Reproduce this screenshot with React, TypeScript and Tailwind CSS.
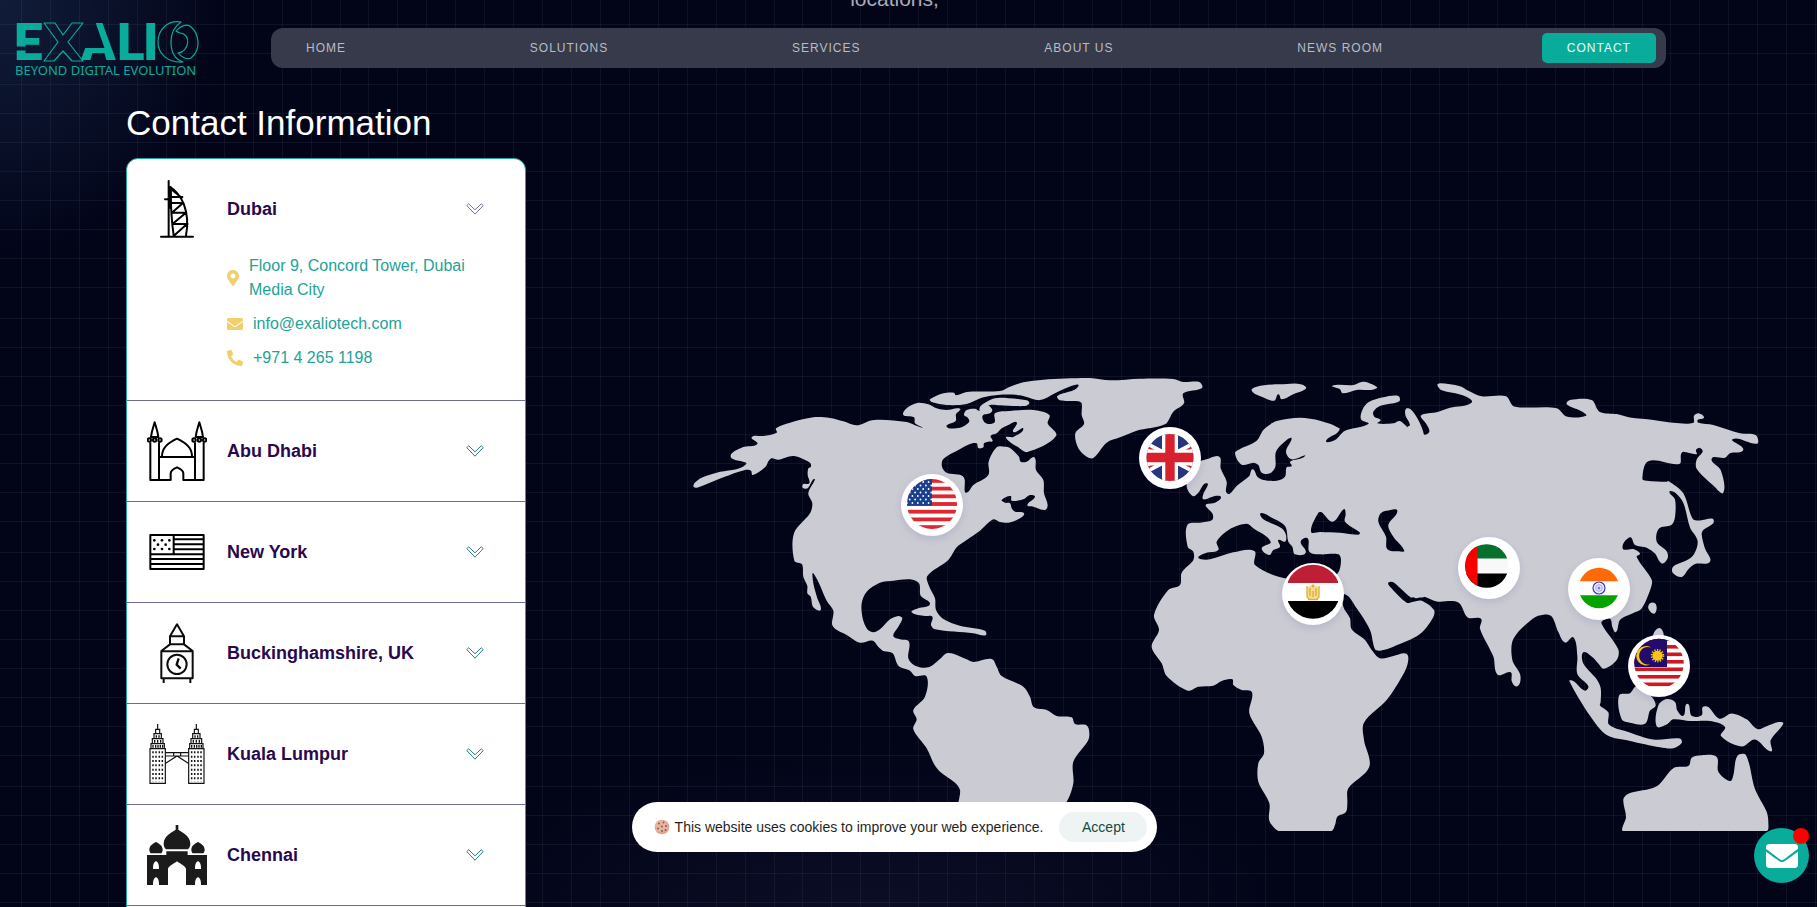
import { useState, type ReactNode } from "react";
import { FaEnvelope, FaMapMarkerAlt, FaPhoneAlt } from "react-icons/fa";

type Point = [number, number];

/** Turns "x,y x,y ..." into a closed curve that passes through every point. */
function coast(list: string): string {
  const p = list
    .trim()
    .split(/\s+/)
    .map((pair) => pair.split(",").map(Number) as Point);
  const n = p.length;
  let d = `M${p[0][0]} ${p[0][1]}`;
  for (let i = 0; i < n; i++) {
    const a = p[(i + n - 1) % n];
    const b = p[i];
    const c = p[(i + 1) % n];
    const e = p[(i + 2) % n];
    const len = Math.hypot(c[0] - b[0], c[1] - b[1]);
    const k1 = (0.3 * len) / (Math.hypot(c[0] - a[0], c[1] - a[1]) || 1);
    const k2 = (0.3 * len) / (Math.hypot(e[0] - b[0], e[1] - b[1]) || 1);
    const f = (v: number) => v.toFixed(1);
    d += `C${f(b[0] + (c[0] - a[0]) * k1)} ${f(b[1] + (c[1] - a[1]) * k1)} ${f(c[0] - (e[0] - b[0]) * k2)} ${f(c[1] - (e[1] - b[1]) * k2)} ${c[0]} ${c[1]}`;
  }
  return d + "Z";
}

const AMERICAS = [
  "42,382 43,370 65,353 110,338 198,313 152,290 188,262 232,252 215,232 250,228 290,218 288,205 330,188 400,172 450,174 490,184 530,196 570,182 600,179 680,186 727,203 705,190 702,172 670,165 680,145 712,129 745,133 770,145 800,150 840,146 828,163 827,183 800,200 840,203 858,194 868,184 862,172 852,165 860,150 885,146 898,152 905,143 925,137 937,150 930,160 908,167 912,185 925,192 944,187 945,160 990,153 1060,150 1108,165 1103,190 1128,228 1042,276 1015,262 978,233 1000,231 1030,206 1000,216 1010,187 985,195 965,205 950,220 932,228 938,243 925,245 912,250 910,262 895,264 890,250 870,252 835,270 790,297 786,320 800,338 850,350 855,397 865,395 880,375 925,345 926,305 950,262 975,260 990,264 1017,290 1022,305 1040,305 1063,292 1068,330 1090,360 1092,400 1103,435 1095,450 1060,440 1042,435 1065,410 1050,405 1030,418 995,422 992,408 965,420 975,428 990,430 995,445 1005,455 1032,460 1020,475 985,488 960,486 940,478 900,512 860,540 830,562 805,600 742,648 748,680 765,715 768,750 790,777 840,797 915,812 917,826 880,820 765,808 753,795 757,770 735,768 695,757 715,745 750,732 722,707 717,670 690,658 640,662 600,668 560,695 545,730 548,775 562,808 580,817 600,808 630,778 655,768 667,775 655,800 640,828 660,838 687,845 685,895 705,917 745,922 780,897 800,880 820,881 860,898 880,906 935,897 950,920 965,948 1030,980 1050,1010 1062,1042 1100,1050 1130,1068 1175,1072 1185,1092 1218,1095 1227,1110 1225,1140 1180,1205 1180,1270 1160,1325 1130,1345 842,1345 840,1290 825,1268 780,1235 762,1212 740,1165 700,1108 710,1078 700,1050 735,1010 740,950 705,948 690,932 655,917 638,880 610,873 595,860 578,842 540,848 500,825 458,798 460,752 440,722 400,640 400,670 412,715 422,750 400,742 392,710 382,700 382,678 370,650 366,613 343,602 342,520 390,460 397,430 385,400 405,358 398,360 383,385 368,383 370,372 388,370 383,345 385,325 393,320 390,308 340,288 295,299 272,296 255,322 218,345 213,332 195,330 130,352 60,380",
  "750,118 790,100 822,98 828,106 860,96 960,93 990,80 1030,67 1090,59 1230,54 1290,61 1380,56 1480,57 1510,66 1558,66 1566,84 1510,100 1512,130 1480,155 1455,193 1370,212 1320,232 1280,248 1240,294 1220,290 1195,265 1186,220 1212,192 1205,165 1205,130 1195,124 1140,121 1132,108 1195,79 1140,92 1090,118 1070,120 1020,106 960,104 905,113 860,132 800,135 755,126",
  "898,148 930,120 960,113 1040,121 1048,130 1035,138 960,136 930,135",
];

const EUROPE_AFRICA = [
  "442,495 480,488 516,480 518,462 497,438 500,432 525,428 543,412 525,408 490,418 490,402 504,372 492,372 475,398 458,408 440,375 470,310 500,298 538,290 542,325 560,365 558,395 568,402 590,378 628,348 638,328 652,350 670,360 710,362 735,350 740,322 755,318 750,305 795,288 755,298 738,275 755,235 740,240 708,275 706,320 690,340 665,338 655,315 640,308 605,314 585,280 600,267 650,242 672,208 710,183 780,173 840,182 898,205 892,218 858,243 885,240 915,212 985,192 963,178 967,150 985,127 1030,112 1075,108 1078,124 1020,138 1000,155 1003,170 1022,180 1012,190 1060,190 1080,183 1108,200 1096,165 1098,146 1112,148 1135,180 1152,225 1155,300 1155,700 1150,712 1125,710 1112,712 1060,667 1045,668 1048,678 1100,728 1120,725 1145,722 1182,750 1178,775 1140,822 1060,860 1020,872 1005,868 990,810 950,745 912,702 910,740 930,775 935,808 975,840 995,870 1020,895 1060,888 1100,882 1102,915 1080,960 1040,1020 972,1088 972,1140 988,1220 925,1285 922,1330 918,1356 892,1370 886,1392 875,1413 845,1413 745,1413 715,1413 688,1382 688,1330 655,1265 655,1210 672,1180 665,1130 628,1060 636,997 605,990 580,975 577,958 545,963 520,977 475,980 443,992 380,948 365,910 335,860 357,810 342,765 385,690 420,675 425,638 460,600 460,575 443,560",
  "475,590 500,578 535,570 530,545 570,507 620,491 640,505 692,545 665,565 688,585 700,570 720,560 715,540 735,545 738,525 725,505 670,478 662,460 690,470 735,498 745,545 757,560 765,583 797,578 782,545 803,535 808,575 840,583 895,583 903,600 893,640 850,660 735,655 645,615 643,573 580,577 510,598 480,597",
  "813,515 835,458 845,457 878,485 912,447 917,462 915,485 960,518 955,524 900,518 840,516",
  "1015,485 1022,460 1040,452 1072,452 1045,495 1060,530 1093,572 1075,574 1042,568 1038,530",
  "635,92 650,80 720,73 797,80 755,105 725,118 715,103 703,122 665,110",
  "877,77 940,75 965,66 985,68 1010,85 950,90 908,100 900,88",
];

const ASIA_OCEANIA = [
  "22,195 55,190 72,214 88,205 78,182 62,162 72,155 110,150 150,137 215,122 190,102 125,87 112,72 120,67 180,75 205,88 245,104 318,104 342,133 470,138 500,162 558,160 540,145 500,127 510,115 575,115 598,148 650,155 690,165 760,172 820,180 880,180 882,160 897,153 912,165 893,172 895,180 940,186 1020,210 1068,216 1071,240 998,227 1030,257 990,267 975,280 935,283 962,315 970,380 940,360 890,312 890,285 908,262 900,252 888,258 890,270 850,263 843,270 838,298 745,290 727,340 740,346 800,349 805,347 850,382 878,455 900,460 938,455 940,468 910,487 905,500 915,540 930,578 885,585 865,600 845,622 818,610 820,592 875,565 893,520 870,480 850,410 825,380 808,378 825,400 825,450 815,472 777,483 770,520 800,548 803,568 785,583 765,555 740,538 705,530 690,508 668,540 700,542 720,555 710,565 755,630 752,655 725,712 700,725 660,745 648,780 637,765 630,742 605,750 610,765 655,830 650,860 612,885 595,870 575,850 550,838 550,870 590,915 602,940 602,980 600,990 625,1010 627,1045 680,1065 760,1088 840,1085 845,1098 820,1113 780,1110 690,1092 620,1075 570,1020 508,920 520,920 555,948 565,935 532,900 532,850 520,795 495,810 475,780 455,735 430,730 400,740 340,800 337,860 360,900 360,925 348,936 335,920 332,895 293,902 280,850 240,770 243,742 203,738 175,695 110,692 70,678 45,682 22,655",
  "745,712 750,697 765,697 770,712 762,727",
  "760,795 778,768 790,795",
  "657,962 690,955 710,935 755,965 767,990 750,1005 735,1043 690,1040 665,1030",
  "770,1050 775,990 800,972 825,980 832,1005 850,1020 862,985 875,1020 905,1018 908,995 925,995 958,1028 995,1013 1040,1030 1072,1058 1100,1050 1135,1038 1150,1042 1112,1090 1113,1122 1065,1088 1025,1108 963,1078 975,1052 930,1035 870,1035 820,1030 800,1045",
  "670,1350 678,1310 670,1260 685,1243 770,1222 820,1170 866,1163 875,1140 905,1133 950,1138 955,1180 990,1207 1000,1190 1012,1135 1038,1133 1065,1230 1100,1295 1105,1325 1100,1350",
];

function WorldMap() {
  return (
    <svg viewBox="0 0 3321 1413" className="block w-full fill-[#cacbd3]" role="img" aria-label="World map">
      <path d={AMERICAS.map(coast).join("")} />
      <path transform="translate(1080 0)" fillRule="evenodd" d={EUROPE_AFRICA.map(coast).join("")} />
      <path transform="translate(2160 0) scale(1 1.0466)" d={ASIA_OCEANIA.map(coast).join("")} />
    </svg>
  );
}

function UsFlag() {
  return (
    <g clipPath="url(#us)">
      <clipPath id="us"><circle cx="31" cy="30" r="25" /></clipPath>
      <path fill="#fff" d="M0 0h62v62H0z" />
      {[0, 1, 2, 3, 4, 5, 6].map((i) => (
        <rect key={i} x="0" y={5 + i * 7.7} width="62" height="3.8" fill="#e0262f" />
      ))}
      <path fill="#1b3f8f" d="M0 0h31v31.700H0z" />
      {[0, 1, 2, 3, 4, 5, 6].flatMap((r) =>
        [0, 1, 2, 3, 4].map((c) => (
          <circle key={`${r}-${c}`} cx={6 + c * 5.4 + (r % 2) * 2.7} cy={8 + r * 3.5} r="0.9" fill="#fff" />
        )),
      )}
    </g>
  );
}

function UkFlag() {
  return (
    <g clipPath="url(#uk)">
      <clipPath id="uk"><circle cx="31" cy="30.500" r="23.500" /></clipPath>
      <path fill="#27367c" d="M0 0h62v62H0z" />
      <path stroke="#fff" strokeWidth="7" d="M-5 11.500 67 49.500M-5 49.500 67 11.500" />
      <path stroke="#d8202f" strokeWidth="2" d="M-5 13 31 32M31 29 67 48M-5 48 31 29M31 32 67 13" />
      <path stroke="#fff" strokeWidth="16" d="M31 0v62M0 30.500h62" />
      <path stroke="#d8202f" strokeWidth="9.400" d="M31 0v62M0 30.500h62" />
    </g>
  );
}

function EgyptFlag() {
  return (
    <g>
      <clipPath id="eg"><path d="M6 0h50v62H6z" /></clipPath>
      <clipPath id="eg2"><circle cx="31" cy="28.700" r="27" /></clipPath>
      <g clipPath="url(#eg)">
        <g clipPath="url(#eg2)">
          <path fill="#bf1f36" d="M0 0h62v20H0z" />
          <path fill="#000" d="M0 38h62v24H0z" />
        </g>
      </g>
      <path fill="#f3dc92" d="M25 24l3-1 3-1.500 3 1.500 3 1v10l-2 2h-8l-2-2z" />
      <path fill="none" stroke="#dcae35" strokeWidth="1.300" d="M25 23v11l2 2M37 23v11l-2 2M28 25v8M34 25v8M31 28v6M26 36.500h10" />
      <circle cx="31" cy="23" r="1.400" fill="#dcae35" />
    </g>
  );
}

function UaeFlag() {
  return (
    <g clipPath="url(#ae)">
      <clipPath id="ae"><circle cx="28.700" cy="29" r="21.800" /></clipPath>
      <path fill="#f8f8f8" d="M0 0h62v62H0z" />
      <path fill="#06702c" d="M0 0h62v21.500H0z" />
      <path fill="#000" d="M0 36.500h62V62H0z" />
      <path fill="#f90000" d="M0 0h19.500v62H0z" />
    </g>
  );
}

function IndiaFlag() {
  return (
    <g>
      <clipPath id="in"><circle cx="31" cy="30" r="20.200" /></clipPath>
      <g clipPath="url(#in)">
        <path fill="#fff" d="M0 0h62v62H0z" />
        <path fill="#ff6a08" d="M0 0h62v23.200H0z" />
        <path fill="#05a300" d="M0 37.200h62V62H0z" />
      </g>
      <circle cx="31" cy="30" r="6" fill="#eeeefa" stroke="#3a35cc" strokeWidth="1.200" />
      <circle cx="31" cy="30" r="3.300" fill="none" stroke="#a3a1e6" strokeWidth="1" />
      <circle cx="31" cy="30" r="1.500" fill="#7f7cdc" />
    </g>
  );
}

function MalaysiaFlag() {
  return (
    <g clipPath="url(#my)">
      <clipPath id="my"><circle cx="31" cy="28.500" r="24.800" /></clipPath>
      <path fill="#fff" d="M0 0h62v62H0z" />
      {[0, 1, 2, 3, 4, 5, 6].map((i) => (
        <rect key={i} x="0" y={2.5 + i * 7.5} width="62" height="3.600" fill="#cf1820" />
      ))}
      <path fill="#210b6b" d="M0 0h39v32H0z" />
      <path fill="#f9c311" d="M23 12.500a8.800 8.800 0 1 0 0 16.500 9.700 9.700 0 1 1 0-16.500z" />
      <circle cx="29.500" cy="20.700" r="5" fill="#f9c311" />
      <circle cx="29.500" cy="20.700" r="5.500" fill="none" stroke="#f9c311" strokeWidth="2.500" strokeDasharray="1.200 1.270" />
    </g>
  );
}

const pins: { country: string; place: string; flag: ReactNode }[] = [
  { country: "United States", place: "left-[22.8%] top-[30.8%]", flag: <UsFlag /> },
  { country: "United Kingdom", place: "left-[44.3%] top-[20.8%]", flag: <UkFlag /> },
  { country: "Egypt", place: "left-[57.2%] top-[49.7%]", flag: <EgyptFlag /> },
  { country: "United Arab Emirates", place: "left-[73.1%] top-[44.2%]", flag: <UaeFlag /> },
  { country: "India", place: "left-[83%] top-[48.7%]", flag: <IndiaFlag /> },
  { country: "Malaysia", place: "left-[88.4%] top-[65%]", flag: <MalaysiaFlag /> },
];

function BurjIcon() {
  return (
    <svg viewBox="0 0 180 180" className="size-15 shrink-0" fill="none" stroke="#000" strokeWidth="6" strokeLinecap="round">
      <path d="M42 173h96M65 6v165M70 24c22 14 32 32 40 50 12 32 14 62 7 96M71 28c0 60 3 100 9 142M54 61h14M72 54h34M74 72h34M76 101h42M78 135h44M78 98l30-26M80 132l36-30M84 167l36-32M72 30l32 26" />
      <path d="M70 26v60" strokeWidth="8" />
    </svg>
  );
}

function MosqueIcon() {
  return (
    <svg viewBox="0 0 180 180" className="size-15 shrink-0" fill="none" stroke="#000" strokeWidth="6" strokeLinejoin="round">
      <path d="M23 4c-4 14-9 26-11 44h22C32 30 27 18 23 4zM157 4c-4 14-9 26-11 44h22c-2-18-7-30-11-44z" />
      <circle cx="7" cy="57" r="5" /><circle cx="23" cy="57" r="5" /><circle cx="39" cy="57" r="5" />
      <circle cx="141" cy="57" r="5" /><circle cx="157" cy="57" r="5" /><circle cx="173" cy="57" r="5" />
      <path d="M10 64v113h61v-20c0-8 8-13 19-18 11 5 19 10 19 18v20h61V64M36 64v113M144 64v113M38 108h104M45 106c0-26 18-40 45-53 27 13 45 27 45 53" />
    </svg>
  );
}

function FlagIcon() {
  const stars: Point[] = [[22, 55], [45, 55], [67, 55], [33, 68], [56, 68], [22, 81], [45, 81], [67, 81]];
  return (
    <svg viewBox="0 0 180 180" className="size-15 shrink-0" fill="none" stroke="#000" strokeWidth="6" strokeLinejoin="round">
      <path d="M10 39h160v102H10zM80 39v58" />
      <path d="M80 52h90M80 67h90M80 82h90M10 97h160M10 111h160M10 126h160" />
      {stars.map(([x, y]) => (
        <circle key={`${x}-${y}`} cx={x} cy={y} r="4" fill="#000" stroke="none" />
      ))}
    </svg>
  );
}

function ClockTowerIcon() {
  return (
    <svg viewBox="0 0 180 180" className="size-15 shrink-0" fill="none" stroke="#0c0c0c" strokeWidth="6" strokeLinejoin="round">
      <path d="M90 4 69 40v24L43 84v82h94V84l-26-20V40zM69 40h42M69 64h42M43 85h94M50 166v14M130 166v14" />
      <circle cx="90" cy="124" r="29" />
      <path d="M95 106l-6 19 12 12" strokeWidth="7" />
    </svg>
  );
}

function TwinTowersIcon() {
  const tower = (
    <g>
      <path d="M9 74h46v104H9zM12 59h40v15H12zM16 44h32v15H16zM21 29h22v15H21zM26 16h12v13H26zM32 0v16" />
      <path strokeWidth="4.500" strokeDasharray="6 7" d="M18 82v92M27 82v92M37 82v92M46 82v92" />
      <path strokeWidth="4" d="M18 63v8M26 63v8M33 63v8M40 63v8M47 63v8M23 48v8M32 48v8M41 48v8M28 34v7M36 34v7" />
    </g>
  );
  return (
    <svg viewBox="0 0 180 180" className="size-15 shrink-0" fill="none" stroke="#111" strokeWidth="3.500">
      {tower}
      <g transform="translate(116 0)">{tower}</g>
      <path d="M55 86h70M55 96h70M80 86v10M101 86v10M56 118l34-22 34 22" />
    </svg>
  );
}

function PalaceIcon() {
  return (
    <svg viewBox="0 0 180 180" className="size-15 shrink-0" fill="#1b1b1b">
      <path d="M86 0h8v14c6 6 36 16 36 42 0 8-3 12-7 17H57c-4-5-7-9-7-17 0-26 30-36 36-42z" />
      <path d="M27 50c6 5 20 10 20 24 0 5-2 8-4 11H11c-2-3-4-6-4-11 0-14 14-19 20-24zM153 50c6 5 20 10 20 24 0 5-2 8-4 11h-32c-2-3-4-6-4-11 0-14 14-19 20-24z" />
      <path
        fillRule="evenodd"
        d="M58 79h64v11h58v90h-18c0-12-1-20-9-24-8 4-9 12-9 24h-27v-48c0-8-18-16-27-23-9 7-27 15-27 23v48H36c0-12-1-20-9-24-8 4-9 12-9 24H0V90h58zM18 132h18c0-12-1-20-9-24-8 4-9 12-9 24zM144 132h18c0-12-1-20-9-24-8 4-9 12-9 24z"
      />
    </svg>
  );
}

function Chevron({ open }: { open: boolean }) {
  return (
    <svg
      viewBox="0 0 18 12"
      className={open ? "h-3 w-[18px] stroke-[#7d6f98]" : "h-3 w-[18px] stroke-[#2f7d80]"}
      fill="none"
      strokeLinejoin="round"
      aria-hidden="true"
    >
      <path d="M.8 2.600 2.700.8 9 6.800 15.300.8l1.900 1.800L9 11.200z" />
    </svg>
  );
}

const offices: { name: string; icon: ReactNode }[] = [
  { name: "Dubai", icon: <BurjIcon /> },
  { name: "Abu Dhabi", icon: <MosqueIcon /> },
  { name: "New York", icon: <FlagIcon /> },
  { name: "Buckinghamshire, UK", icon: <ClockTowerIcon /> },
  { name: "Kuala Lumpur", icon: <TwinTowersIcon /> },
  { name: "Chennai", icon: <PalaceIcon /> },
];

function OfficeDetails() {
  return (
    <address className="flex flex-col gap-2.5 pb-[30px] pl-[100px] pr-[42px] text-base leading-6 text-[#1ea396] not-italic">
      <p className="flex items-center gap-2.5">
        <FaMapMarkerAlt className="h-4 w-3 shrink-0 text-[#f1cf6d]" />
        Floor 9, Concord Tower, Dubai Media City
      </p>
      <a href="mailto:info@exaliotech.com" className="flex items-center gap-2.5">
        <FaEnvelope className="size-4 shrink-0 text-[#f1cf6d]" />
        info@exaliotech.com
      </a>
      <a href="tel:+97142651198" className="flex items-center gap-2.5">
        <FaPhoneAlt className="size-4 shrink-0 text-[#f1cf6d]" />
        +971 4 265 1198
      </a>
    </address>
  );
}

function Logo() {
  return (
    <svg viewBox="0 0 184 58" className="h-[58px] w-[184px] overflow-visible" role="img" aria-label="Exalio">
      <defs>
        <mask id="cuts">
          <path fill="#fff" d="M-4 0h192v58H-4z" />
          <path fill="#000" d="M-4 25.500h31v4H-4zM66 0h13l9.500 27H66z" />
        </mask>
      </defs>
      <g fill="#09ab9a" mask="url(#cuts)" fontFamily="Roboto, sans-serif" fontWeight="900" fontSize="51">
        <text x="-2" y="39">E</text>
        <text x="65" y="39">A</text>
        <text x="101" y="39">L</text>
        <text x="127" y="39">I</text>
      </g>
      <g fill="none" stroke="#09ab9a" strokeWidth="1.200" strokeLinejoin="round">
        <path d="M28 2h11l8 12 9-12h11L52 21l15 19H56l-9-10-9 10H28l14-19z" />
        <path d="M165 1c-14-2-23 8-23 20s10 21 25 20c-9-3-12-11-12-20s4-16 10-20z" />
        <path d="M160 10c4-5 10-7 14-5 10 8 11 24 1 32-4 2-10-1-13-5 11-1 14-19 2-20-2-1-3-1-4-2z" />
      </g>
      <text x="-1" y="54" fill="#09ab9a" fontFamily="'Noto Sans', sans-serif" fontSize="13">
        BEYOND DIGITAL EVOLUTION
      </text>
    </svg>
  );
}

function Header() {
  const links = ["Home", "Solutions", "Services", "About us", "News room"];
  return (
    <header className="absolute inset-x-0 top-0 z-10 flex items-start pr-[151px] pl-4">
      <a href="#home" className="mt-[21px] w-[255px] shrink-0">
        <Logo />
      </a>
      <nav className="mt-7 flex h-10 flex-1 items-center justify-between rounded-xl bg-[#363a4a] px-2.5 text-xs tracking-[1px] uppercase">
        {links.map((label) => (
          <a key={label} href={`#${label.toLowerCase().replace(" ", "-")}`} className="px-[25px] text-[#b9bcc6]">
            {label}
          </a>
        ))}
        <a href="#contact" className="flex h-[30px] items-center rounded-[5px] bg-[#09ab9a] px-[25px] text-[#e4fdf9]">
          Contact
        </a>
      </nav>
    </header>
  );
}

function CookieIcon() {
  return (
    <svg viewBox="0 0 16 16" className="size-4" aria-hidden="true">
      <circle cx="8" cy="8" r="7.300" fill="#dfa58e" />
      <circle cx="7.500" cy="7.300" r="6" fill="#e8b6a0" />
      <g fill="#8e5a50">
        <circle cx="5" cy="4.500" r="1" /><circle cx="9.500" cy="3.500" r=".9" /><circle cx="12" cy="7" r="1" />
        <circle cx="7.800" cy="7.500" r="1" /><circle cx="4" cy="9.500" r="1" /><circle cx="8" cy="12" r="1" />
        <circle cx="11.500" cy="11" r="1" />
      </g>
    </svg>
  );
}

export default function App() {
  const [openOffice, setOpenOffice] = useState("Dubai");
  const [cookieBar, setCookieBar] = useState(true);

  return (
    <div className="relative h-screen overflow-hidden bg-[#020418] font-['Liberation_Sans',Arial,sans-serif]">
      <div className="absolute inset-0 bg-[radial-gradient(ellipse_230px_260px_at_0_0,#111d3a_0%,transparent_100%)]" />
      <div className="absolute inset-0 bg-[radial-gradient(ellipse_420px_160px_at_48%_100%,#0c0e26_0%,transparent_100%)]" />
      <div className="absolute inset-0 bg-[repeating-linear-gradient(90deg,#ffffff0d_0_1px,transparent_1px_29px),repeating-linear-gradient(180deg,transparent_0_28px,#ffffff0d_28px_29px)] bg-[length:434px_234px] bg-[position:368px_56px]" />

      <Header />

      <main className="relative">
        <div className="flex h-[11px] items-end justify-center overflow-hidden pr-7">
          <p className="text-[21px] leading-6 text-[#a9acba]">locations,</p>
        </div>

        <section className="px-[126px] pt-[90px]">
          <h2 className="text-[35px] leading-[44px] text-white">Contact Information</h2>
        </section>

        <section className="flex items-start gap-[154px] pt-[13px] pr-[30px] pl-[126px]">
          <ul className="w-[400px] shrink-0 rounded-t-xl border border-[#27a59a] bg-white pb-5">
            {offices.map(({ name, icon }) => {
              const open = openOffice === name;
              return (
                <li key={name} className="border-b border-[#6f6d92]">
                  <button
                    type="button"
                    aria-expanded={open}
                    onClick={() => setOpenOffice(open ? "" : name)}
                    className={
                      open
                        ? "flex w-full items-center gap-5 px-5 pt-5 pb-[15px] text-left"
                        : "flex w-full items-center gap-5 p-5 text-left"
                    }
                  >
                    {icon}
                    <span className="flex-1 text-lg font-bold text-[#28084f]">{name}</span>
                    <span className="pr-[21px]">
                      <Chevron open={open} />
                    </span>
                  </button>
                  {open && <OfficeDetails />}
                </li>
              );
            })}
          </ul>

          <div className="relative mt-[202px] flex-1">
            <WorldMap />
            {pins.map(({ country, place, flag }) => (
              <svg
                key={country}
                viewBox="0 0 62 62"
                role="img"
                aria-label={country}
                className={`absolute size-[62px] -translate-1/2 rounded-full bg-white shadow-[0_3px_8px_#0000601a] ${place}`}
              >
                {flag}
              </svg>
            ))}
          </div>
        </section>
      </main>

      {cookieBar && (
        <div className="fixed inset-x-0 bottom-[55px] flex justify-center pr-7">
          <div className="flex h-[50px] items-center rounded-full bg-white pr-2.5 pl-[22px] text-sm text-[#1f1f1f]">
            <CookieIcon />
            <p className="ml-[5px]">This website uses cookies to improve your web experience.</p>
            <button
              type="button"
              onClick={() => setCookieBar(false)}
              className="ml-4 h-[30px] w-[88px] rounded-full bg-[#eef3f3] text-[#12493f]"
            >
              Accept
            </button>
          </div>
        </div>
      )}

      <button
        type="button"
        aria-label="Open message form"
        className="fixed right-2 bottom-6 flex size-[55px] items-center justify-center rounded-full bg-[#09ab9a] text-white"
      >
        <FaEnvelope className="size-8" />
        <span className="absolute top-0 right-0 size-4 rounded-full bg-[#ff0000]" />
      </button>
    </div>
  );
}
